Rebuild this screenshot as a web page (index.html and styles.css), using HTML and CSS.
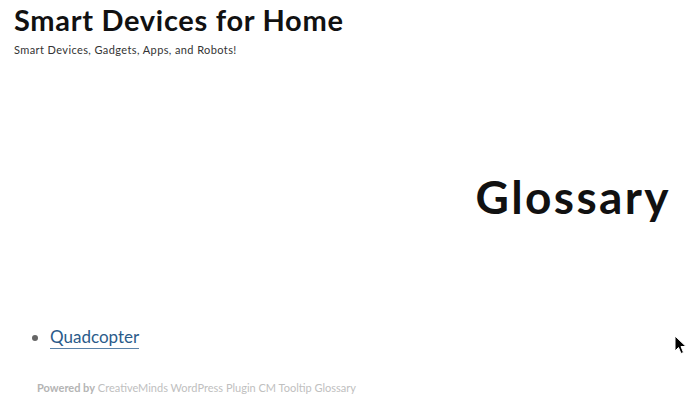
FILE: index.html
```html
<!DOCTYPE html>
<html>
<head>
<meta charset="utf-8">
<link rel="stylesheet" href="styles.css">
</head>
<body>
<header class="site-header">
  <h1 class="site-title">Smart Devices for Home</h1>
  <p class="site-desc">Smart Devices, Gadgets, Apps, and Robots!</p>
</header>
<main class="content">
  <h2 class="page-title">Glossary</h2>
  <ul class="terms">
    <li><a href="#" class="term">Quadcopter</a></li>
  </ul>
  <p class="powered"><strong>Powered by</strong> CreativeMinds WordPress Plugin CM Tooltip Glossary</p>
</main>
<svg class="cursor" width="14" height="20" viewBox="0 0 14 20"><path d="M1 1 L1 16 L4.5 12.5 L7 18.5 L9.5 17.5 L7 11.5 L12 11.5 Z" fill="#000" stroke="#fff" stroke-width="1"/></svg>
</body>
</html>
```
FILE: styles.css
```css
html, body {
  margin: 0;
  padding: 0;
  background: #fff;
}
body {
  font-family: Lato, "Noto Sans", sans-serif;
  color: #111;
  width: 700px;
  height: 401px;
  overflow: hidden;
  position: relative;
}
.site-header {
  padding: 2px 0 0 14px;
}
.site-title {
  margin: 0;
  font-size: 29px;
  font-weight: 700;
  line-height: 36px;
  color: #111;
  letter-spacing: 0.7px;
}
.site-desc {
  margin: 5px 0 0;
  font-size: 11px;
  line-height: 14px;
  color: #333;
  letter-spacing: 0.4px;
}
.content {
  padding: 0 0 0 37px;
}
.page-title {
  margin: 112px 29px 0 0;
  text-align: right;
  font-size: 46px;
  font-weight: 700;
  line-height: 56px;
  color: #111;
  letter-spacing: 2.4px;
}
.terms {
  margin: 101px 0 0;
  padding: 0 0 0 13px;
  font-size: 17px;
  line-height: 22px;
}
.terms li {
  color: #666;
}
.term {
  color: #2b5b8a;
  text-decoration: none;
  border-bottom: 1px solid #5a82a8;
  padding-bottom: 1px;
}
.powered {
  margin: 33px 0 0;
  font-size: 11px;
  line-height: 14px;
  color: #c0c0c0;
}
.powered strong {
  font-weight: 700;
  color: #b4b4b4;
}
.cursor {
  position: absolute;
  left: 674px;
  top: 335px;
}
```
